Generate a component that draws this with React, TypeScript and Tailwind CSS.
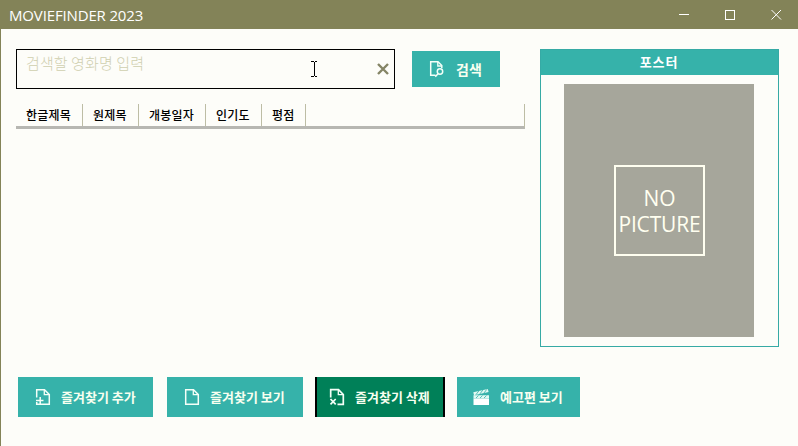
import React from "react";

type DocKind = "search" | "add" | "view" | "remove";

function DocIcon({ kind }: { kind: DocKind }) {
  return (
    <svg width="16" height="18" viewBox="0 0 16 18" fill="none" stroke="#f4fff8" strokeWidth="1.5" className="shrink-0">
      {kind === "view" && <path d="M1.7 1.7H9.5L14.3 6.5V16.3H1.7Z" />}
      {kind === "add" && <path d="M1.7 9.5V1.7H9.5L14.3 6.5V16.3H1.7V14M5.2 9V16M1 12.6H8.5" />}
      {kind === "remove" && <path d="M1.7 9.5V1.7H9.5L14.3 6.5V16.3H8.5M1.5 11L6.7 16.3M6.7 11L1.5 16.3" strokeWidth="1.7" />}
      {kind === "search" && <path d="M6.5 15.3H1.7V1.7H9L12.8 5.5V8M6.3 16.7L9 13.8" />}
      {kind === "search" && <circle cx="11" cy="11.5" r="2.7" />}
      <path d={kind === "search" ? "M8.8 2V6H12.5" : "M9.3 2V6.7H14"} strokeWidth="1.3" />
    </svg>
  );
}

function ClapperIcon() {
  return (
    <svg width="17" height="18" viewBox="0 0 17 18" className="shrink-0">
      <path d="M0.5 10.5H16V17H0.5Z" fill="#fff" />
      <path d="M0.3 4.2L14.8 1L15.6 4L1 7.2ZM0.5 7.2H16V10.5H0.5Z" fill="#e2faf3" />
      <path d="M2.8 6.8L5.8 3M6.8 6L9.8 2.1M10.8 5.2L13.8 1.4M3 10L5.5 7.6M7 10L9.5 7.6M11 10L13.5 7.6" stroke="#45b9af" strokeWidth="0.9" />
    </svg>
  );
}

const buttonText = "font-bold text-[#f8fff0] whitespace-nowrap";
const columns = [
  { label: "한글제목", width: "w-[67px]" },
  { label: "원제목", width: "w-[56px]" },
  { label: "개봉일자", width: "w-[67px]" },
  { label: "인기도", width: "w-[56px]" },
  { label: "평점", width: "w-[44px]" },
];

export default function App() {
  return (
    <div className="flex h-[446px] w-[798px] flex-col overflow-hidden bg-[#fdfdf9] font-['Noto_Sans_CJK_KR',sans-serif]">
      <header className="flex h-[29px] shrink-0 items-center justify-between bg-[#838358] pl-[9px] pr-[16px]">
        <span className="whitespace-nowrap font-['Open_Sans','Noto_Sans',sans-serif] text-[15px] leading-[20px] tracking-[-0.15px] text-white">MOVIEFINDER 2023</span>
        <svg width="104" height="12" viewBox="0 0 104 12" fill="none" stroke="#fff" shapeRendering="crispEdges">
          <path d="M1 5.5H11" />
          <rect x="47.5" y="1.5" width="9" height="9" />
          <path d="M93.5 1L103 10.5M103 1L93.5 10.5" shapeRendering="auto" />
        </svg>
      </header>

      <main className="flex flex-1 flex-col border-l border-[#838358] pl-[15px] pt-[20px]">
        <div className="flex h-[328px]">
          <section className="w-[509px]">
            <div className="flex h-[40px]">
              <div className="flex h-[40px] w-[379px] justify-between border border-black pl-[9px] pr-[5px]">
                <span className="mt-[3px] whitespace-nowrap text-[15px] font-light leading-[20px] tracking-[0.1px] text-[#cfcfaf]">검색할 영화명 입력</span>
                <div className="flex items-center gap-[59px]">
                  <svg width="8" height="16" fill="none" stroke="#000" shapeRendering="crispEdges">
                    <path d="M1 .5H3.5M4.5 .5H7M4 1V15M1 15.5H3.5M4.5 15.5H7" />
                  </svg>
                  <svg width="12" height="12" viewBox="0 0 12 12" stroke="#858566" strokeWidth="2.4"><path d="M1 1L11 11M11 1L1 11" /></svg>
                </div>
              </div>
              <button className="ml-[17px] mt-[2px] flex h-[36px] w-[88px] items-center bg-[#36b2aa] pl-[17px]">
                <DocIcon kind="search" />
                <span className={`${buttonText} ml-[11px] text-[14px]`}>검색</span>
              </button>
            </div>
            <div className="mt-[15px] flex h-[25px] w-[509px] border-b-[3px] border-r border-b-[#b7b7b2] border-r-[#bdbda5]">
              {columns.map((c) => (
                <div key={c.label} className={`${c.width} flex items-center border-r border-[#bdbda5] pl-[10px] text-[12px] font-medium tracking-[0.25px] text-black whitespace-nowrap`}>
                  {c.label}
                </div>
              ))}
            </div>
          </section>

          <section className="ml-[15px] h-[298px] w-[239px] border border-[#36aaa5]">
            <h2 className="flex h-[25px] items-center justify-center bg-[#36b2aa] pr-[1px] text-[13px] font-bold tracking-[0.8px] text-white"><span className="-mt-[2px]">포스터</span></h2>
            <div className="ml-[23px] mt-[9px] flex h-[253px] w-[190px] items-center justify-center bg-[#a6a69b]">
              <div className="ml-[1px] flex h-[91px] w-[91px] flex-col items-center justify-center border-2 border-[#fffff0] text-center font-['Open_Sans','Noto_Sans',sans-serif] text-[21px] leading-[26px] tracking-[-0.15px] text-[#fffff0]">
                <span>NO</span><span>PICTURE</span>
              </div>
            </div>
          </section>
        </div>

        <footer className="flex h-[40px] pl-[2px]">
          <button className="flex h-[40px] w-[135px] items-center bg-[#36b2aa] pl-[17px]">
            <DocIcon kind="add" /><span className={`${buttonText} ml-[10px] text-[13px]`}>즐겨찾기 추가</span>
          </button>
          <button className="ml-[14px] flex h-[40px] w-[136px] items-center bg-[#36b2aa] pl-[17px]">
            <DocIcon kind="view" /><span className={`${buttonText} ml-[10px] text-[13px]`}>즐겨찾기 보기</span>
          </button>
          <button className="ml-[12px] flex h-[40px] w-[130px] items-center border-x-2 border-black bg-[#008058] pl-[12px]">
            <DocIcon kind="remove" /><span className={`${buttonText} ml-[10px] text-[13px]`}>즐겨찾기 삭제</span>
          </button>
          <button className="ml-[12px] flex h-[40px] w-[123px] items-center bg-[#36b2aa] pl-[16px]">
            <ClapperIcon /><span className={`${buttonText} ml-[10px] text-[13px]`}>예고편 보기</span>
          </button>
        </footer>
      </main>
    </div>
  );
}
